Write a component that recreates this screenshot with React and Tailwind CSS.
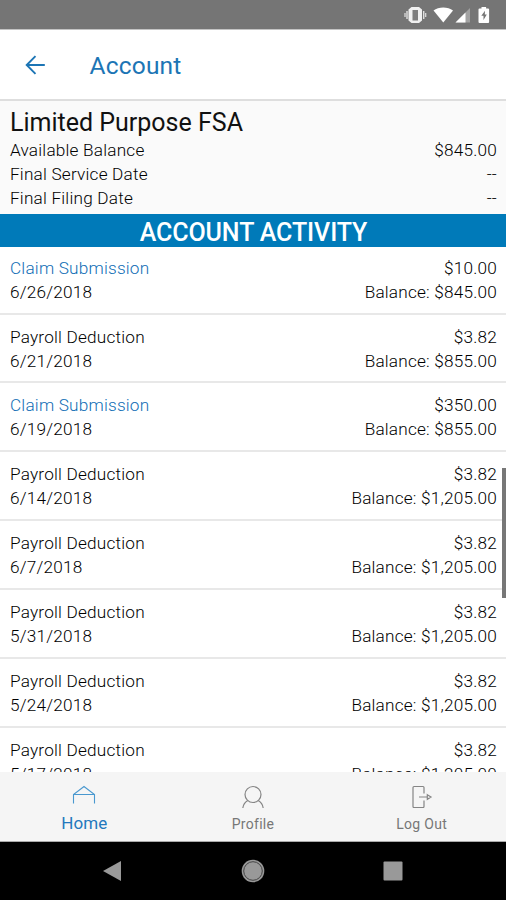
const transactions = [
  { type: 'Claim Submission', date: '6/26/2018', amount: '$10.00', balance: '$845.00', claim: true },
  { type: 'Payroll Deduction', date: '6/21/2018', amount: '$3.82', balance: '$855.00' },
  { type: 'Claim Submission', date: '6/19/2018', amount: '$350.00', balance: '$855.00', claim: true },
  { type: 'Payroll Deduction', date: '6/14/2018', amount: '$3.82', balance: '$1,205.00' },
  { type: 'Payroll Deduction', date: '6/7/2018', amount: '$3.82', balance: '$1,205.00' },
  { type: 'Payroll Deduction', date: '5/31/2018', amount: '$3.82', balance: '$1,205.00' },
  { type: 'Payroll Deduction', date: '5/24/2018', amount: '$3.82', balance: '$1,205.00' },
  { type: 'Payroll Deduction', date: '5/17/2018', amount: '$3.82', balance: '$1,205.00' },
];

function StatusBar() {
  return (
    <div className="flex h-[30px] shrink-0 justify-end border-b border-[#c4c4c4] bg-[#757575]">
      <svg width="120" height="29" viewBox="0 0 120 29" fill="#fff">
        <path d="M25.500 7h7.500l3 2.500v11l-3 2.500h-7.500l-3-2.500v-11Z" fill="#f0f0f0" />
        <rect x="26.500" y="10" width="5.500" height="10.500" fill="#7d7d7d" />
        <path d="M21 11v8M37.700 11v8" stroke="#e0e0e0" strokeWidth="1.400" />
        <path d="M19 13v4M39.700 13v4" stroke="#e0e0e0" strokeWidth="1.200" />
        <path d="M47.500 10.500C52.500 6.600 62 6.600 67 10.500L57.300 22.500Z" />
        <path d="M84 8v14.500H69.500Z" fill="#a2a2a2" />
        <path d="M79.500 12.500v10H69.500Z" />
        <path d="M95.500 7h4.600v1.600h2q1 0 1 1v12.400q0 1-1 1h-8.600q-1 0-1-1V9.600q0-1 1-1h2Z" />
        <path d="M99 10.800 95.300 15.800h2.200v4.200l3.300-5.400h-2Z" fill="#757575" />
      </svg>
    </div>
  );
}

function Header() {
  return (
    <header className="flex h-[71px] shrink-0 items-center border-b-2 border-[#dedede] bg-white pl-[25px] text-[#1c75b5]">
      <svg width="20" height="20" viewBox="0 0 20 20" fill="none" stroke="currentColor" strokeWidth="1.900">
        <path d="M19.800 10H2M10.500 1.200 1.700 10l8.800 8.800" />
      </svg>
      <h1 className="mt-[3px] ml-[44.500px] text-[24.500px] leading-[30px] font-normal tracking-[0.200px]">Account</h1>
    </header>
  );
}

function SummaryLine({ label, value }) {
  return (
    <div className="flex h-6 justify-between">
      <span>{label}</span>
      <span>{value}</span>
    </div>
  );
}

function Transaction({ item }) {
  return (
    <li className="flex h-[68.850px] shrink-0 justify-between border-b-2 border-[#e8e8e8] pt-[10px] pr-[9px] pl-2.5 first:h-[67.500px] first:pt-[8.500px]">
      <div>
        <p className={item.claim ? 'text-[#0f6db5]' : ''}>{item.type}</p>
        <p>{item.date}</p>
      </div>
      <div className="text-right">
        <p>{item.amount}</p>
        <p>Balance: {item.balance}</p>
      </div>
    </li>
  );
}

function HomeIcon() {
  return (
    <svg width="24" height="26" viewBox="0 0 24 26" fill="none" stroke="#4998cf" strokeWidth="1.100">
      <path d="M1.500 21.500V12.500L12 4.500 22.500 12.500V21.500M1.500 12.500h21" />
    </svg>
  );
}

function ProfileIcon() {
  return (
    <svg width="24" height="26" viewBox="0 0 24 26" fill="none" stroke="#858585" strokeWidth="1.200">
      <circle cx="12" cy="12.500" r="8" />
      <path d="M6.800 18.500Q2.500 21 1.800 26M17.200 18.500Q21.500 21 22.200 26" />
    </svg>
  );
}

function LogOutIcon() {
  return (
    <svg width="24" height="26" viewBox="0 0 24 26" fill="none" stroke="#858585" strokeWidth="1.200">
      <path d="M14 11.500V5.500q0-1-1-1H4q-1 0-1 1v19q0 1 1 1h9q1 0 1-1V18.500M9 15h8M17.300 12.700 21 15l-3.700 2.300Z" />
    </svg>
  );
}

function Tab({ label, icon, active }) {
  return (
    <div className={active ? 'flex flex-col items-center pt-2.5 text-[#2378bd]' : 'flex flex-col items-center pt-2.5 text-[#777]'}>
      {icon}
      <span className={active ? 'mt-[3px] text-[17px] leading-6 tracking-[0.1px]' : 'mt-1 text-[14px] leading-6 tracking-[0.300px]'}>{label}</span>
    </div>
  );
}

export default function App() {
  return (
    <div className="relative flex h-[900px] w-[506px] flex-col overflow-hidden bg-white font-[Roboto,sans-serif] text-black">
      <StatusBar />
      <Header />
      <section className="h-[113px] shrink-0 bg-[#fafafa] pt-[5px] pr-[9px] pl-2.5 text-[17.200px] leading-6 font-light tracking-[0.200px]">
        <h2 className="h-8 pt-px text-[25px] leading-8 font-normal tracking-[0px] text-[#111]">Limited Purpose FSA</h2>
        <SummaryLine label="Available Balance" value="$845.00" />
        <SummaryLine label="Final Service Date" value="--" />
        <SummaryLine label="Final Filing Date" value="--" />
      </section>
      <h2 className="h-[33px] shrink-0 bg-[#007ab9] pt-[3px] pl-px text-center text-[25px] leading-[32px] font-medium tracking-[-0.100px] text-white">ACCOUNT ACTIVITY</h2>
      <ul className="flex min-h-0 flex-1 flex-col overflow-hidden text-[17.200px] leading-6 font-light tracking-[0.200px]">
        {transactions.map((item) => (
          <Transaction key={item.date} item={item} />
        ))}
      </ul>
      <nav className="grid h-[70px] shrink-0 grid-cols-3 border-b border-[#aaa] bg-[#f5f5f5]">
        <Tab label="Home" icon={<HomeIcon />} active />
        <Tab label="Profile" icon={<ProfileIcon />} />
        <Tab label="Log Out" icon={<LogOutIcon />} />
      </nav>
      <footer className="flex h-[58px] shrink-0 items-center justify-center gap-[116px] bg-black">
        <svg width="24" height="24" viewBox="0 0 24 24" fill="#999">
          <path d="M20 2v20L2 12Z" />
        </svg>
        <svg width="24" height="24" viewBox="0 0 24 24">
          <circle cx="12" cy="12" r="11.300" fill="#999" />
          <circle cx="12" cy="12" r="9.300" fill="none" stroke="#444" strokeWidth="1" />
        </svg>
        <svg width="24" height="24" viewBox="0 0 24 24" fill="#999">
          <rect x="2.500" y="2.500" width="19" height="19" rx="1" />
        </svg>
      </footer>
      <div className="absolute top-[468px] right-0 h-[130px] w-1 bg-[#777]" />
    </div>
  );
}
